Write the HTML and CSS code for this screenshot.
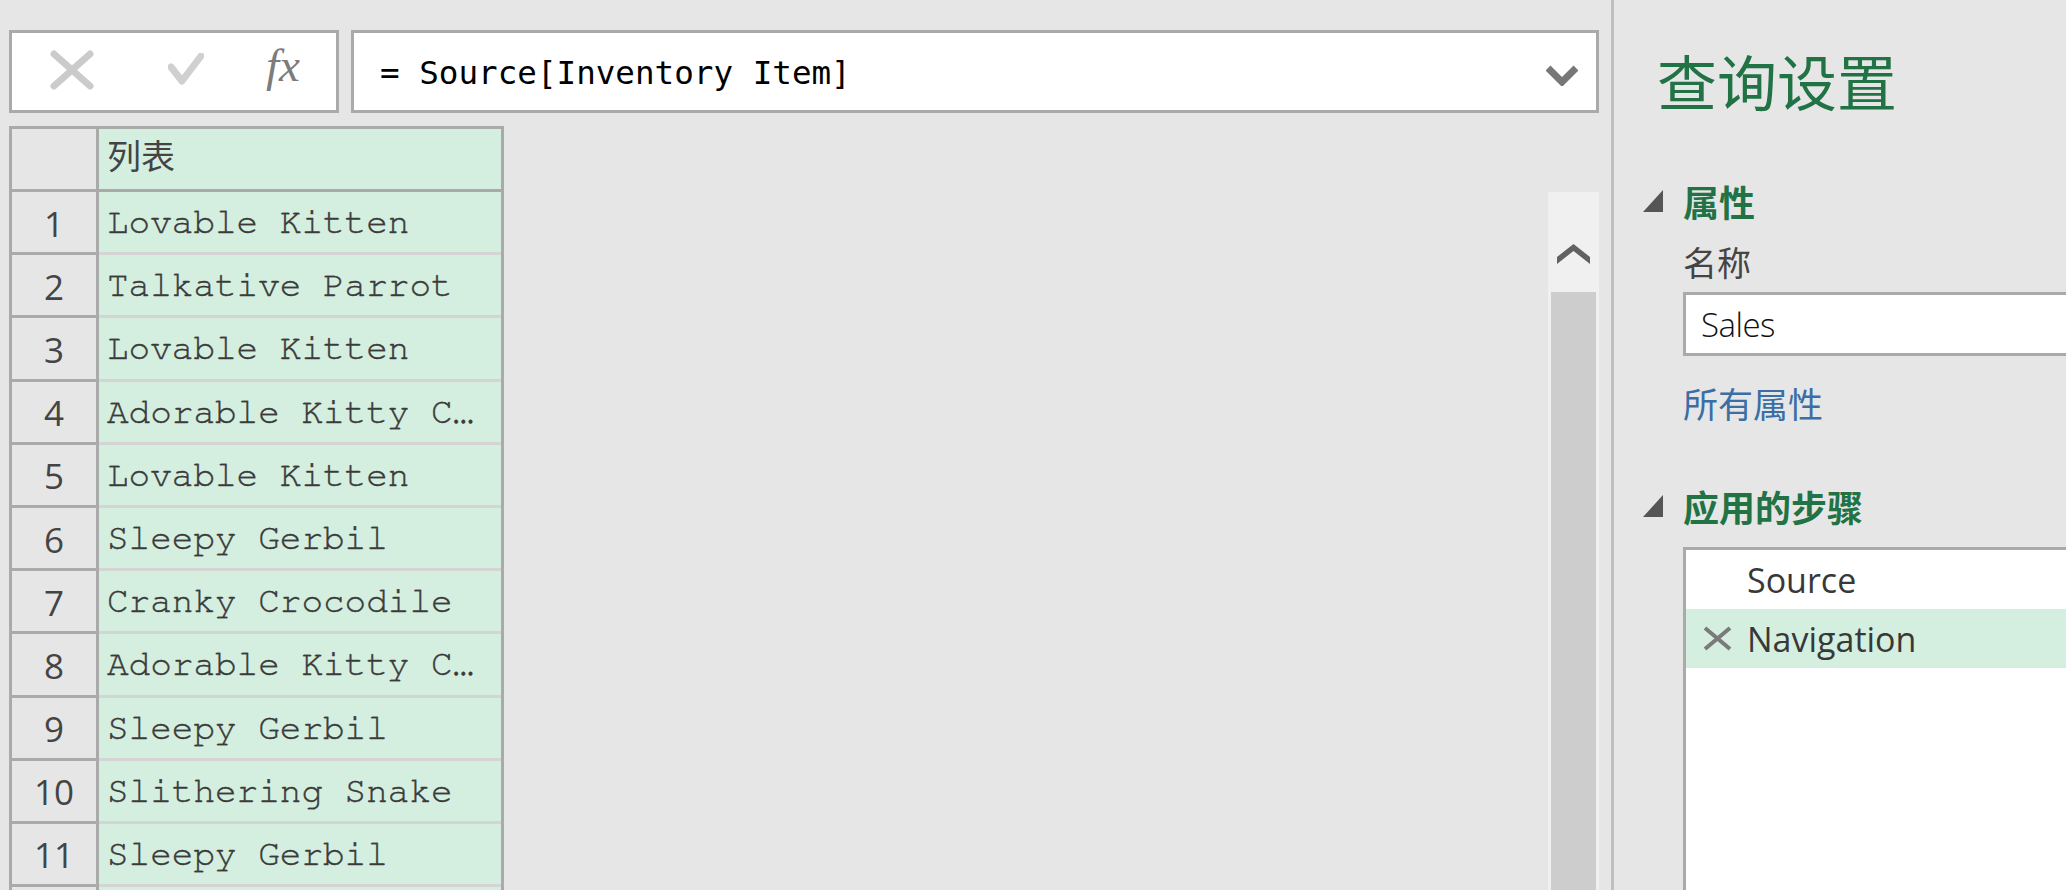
FILE: index.html
```html
<!DOCTYPE html>
<html lang="zh-CN">
<head>
<meta charset="utf-8">
<title>Power Query</title>
<link rel="stylesheet" href="styles.css">
</head>
<body>
<div class="app">
  <div class="left">
    <div class="toolbar">
      <div class="tools">
        <svg class="ic-cancel" width="44" height="40" viewBox="0 0 44 40"><path d="M4 4 L40 36 M40 4 L4 36" stroke="#cbcbcb" stroke-width="7" stroke-linecap="round" fill="none"/></svg>
        <svg class="ic-check" width="36" height="33" viewBox="0 0 36 33"><path d="M3 14 L14 28 L33 3" stroke="#d0d0d0" stroke-width="7" stroke-linecap="round" stroke-linejoin="round" fill="none"/></svg>
        <span class="fx">fx</span>
      </div>
      <div class="formula">
        <span class="formula-text">= Source[Inventory Item]</span>
        <svg class="chev-down" width="32" height="22" viewBox="0 0 32 22"><polyline points="2,4 16,18 30,4" stroke="#777" stroke-width="7" fill="none"/></svg>
      </div>
    </div>
    <div class="content">
      <div class="grid">
        <div class="row head"><div class="idx"></div><div class="cell hcell">列表</div></div>
        <div class="row"><div class="idx">1</div><div class="cell">Lovable Kitten</div></div>
        <div class="row"><div class="idx">2</div><div class="cell">Talkative Parrot</div></div>
        <div class="row"><div class="idx">3</div><div class="cell">Lovable Kitten</div></div>
        <div class="row"><div class="idx">4</div><div class="cell">Adorable Kitty Collar</div></div>
        <div class="row"><div class="idx">5</div><div class="cell">Lovable Kitten</div></div>
        <div class="row"><div class="idx">6</div><div class="cell">Sleepy Gerbil</div></div>
        <div class="row"><div class="idx">7</div><div class="cell">Cranky Crocodile</div></div>
        <div class="row"><div class="idx">8</div><div class="cell">Adorable Kitty Collar</div></div>
        <div class="row"><div class="idx">9</div><div class="cell">Sleepy Gerbil</div></div>
        <div class="row"><div class="idx">10</div><div class="cell">Slithering Snake</div></div>
        <div class="row"><div class="idx">11</div><div class="cell">Sleepy Gerbil</div></div>
        <div class="row"><div class="idx">12</div><div class="cell">Lovable Kitten</div></div>
      </div>
      <div class="scrollbar">
        <div class="scroll-up"><svg width="33" height="20" viewBox="0 0 33 20"><polygon points="0,13 16.5,0 33,13 33,20 16.5,7 0,20" fill="#616161"/></svg></div>
        <div class="thumb"></div>
      </div>
    </div>
  </div>
  <div class="divider"></div>
  <div class="right">
    <div class="title">查询设置</div>
    <div class="sec-head">
      <svg class="tri" width="20" height="22" viewBox="0 0 20 22"><polygon points="20,0 20,22 0,22" fill="#555"/></svg>
      <span>属性</span>
    </div>
    <div class="label">名称</div>
    <div class="input">Sales</div>
    <div class="link">所有属性</div>
    <div class="sec-head steps-head">
      <svg class="tri" width="20" height="22" viewBox="0 0 20 22"><polygon points="20,0 20,22 0,22" fill="#555"/></svg>
      <span>应用的步骤</span>
    </div>
    <div class="steps">
      <div class="step"><span class="step-ic"></span><span>Source</span></div>
      <div class="step active"><span class="step-ic"><svg width="29" height="25" viewBox="0 0 29 25"><path d="M2 2 L27 23 M27 2 L2 23" stroke="#7a7a7a" stroke-width="4" fill="none"/></svg></span><span>Navigation</span></div>
    </div>
  </div>
</div>
</body>
</html>
```

FILE: styles.css
```css
html, body {
  margin: 0;
  padding: 0;
  height: 890px;
  overflow: hidden;
  background: #e6e6e6;
  font-family: "Open Sans", "Noto Sans", "Noto Sans CJK SC", sans-serif;
}

.app {
  display: flex;
  height: 890px;
}

.left {
  width: 1611px;
  flex: none;
  box-sizing: border-box;
  padding: 30px 12px 0 9px;
  display: flex;
  flex-direction: column;
}

.toolbar {
  display: flex;
  gap: 12px;
  height: 83px;
}

.tools {
  width: 330px;
  box-sizing: border-box;
  border: 3px solid #aaaaaa;
  background: #ffffff;
  display: flex;
  align-items: flex-start;
}

.ic-cancel {
  margin: 17px 0 0 38px;
}

.ic-check {
  margin: 20px 0 0 74px;
}

.fx {
  margin: 9px 0 0 62px;
  font-family: "Liberation Serif", serif;
  font-style: italic;
  font-size: 47px;
  line-height: 47px;
  color: #7c7c7c;
}

.formula {
  flex: 1;
  box-sizing: border-box;
  border: 3px solid #aaaaaa;
  background: #ffffff;
  display: flex;
  align-items: center;
  padding: 0 18px 0 26px;
}

.formula-text {
  margin-top: 3px;
  font-family: "DejaVu Sans Mono", "Liberation Mono", monospace;
  font-size: 32.6px;
  color: #000000;
  white-space: pre;
}

.chev-down {
  margin-left: auto;
  margin-top: 6px;
}

.content {
  display: flex;
  margin-top: 13px;
  flex: 1;
  min-height: 0;
}

.grid {
  width: 495px;
  flex: none;
  box-sizing: border-box;
  border: 3px solid #aaaaaa;
  border-bottom: none;
  align-self: flex-start;
}

.row {
  display: flex;
  height: 63.2px;
}

.row.head {
  height: 63px;
}

.idx {
  width: 87px;
  flex: none;
  box-sizing: border-box;
  border-right: 3px solid #aaaaaa;
  border-bottom: 3px solid #aaaaaa;
  display: flex;
  align-items: center;
  justify-content: center;
  padding-top: 2px;
  font-family: "Open Sans", sans-serif;
  font-size: 35px;
  color: #444444;
}

.cell {
  flex: 1;
  min-width: 0;
  box-sizing: border-box;
  border-bottom: 3px solid #d4d4d4;
  background: #d4efdf;
  padding: 1px 14px 0 8px;
  line-height: 58px;
  font-family: "Nimbus Mono PS", "Nimbus Mono L", "FreeMono", "Courier New", "Liberation Mono", monospace;
  font-size: 36px;
  color: #3a3a3a;
  -webkit-text-stroke: 0.4px #3a3a3a;
  white-space: nowrap;
  overflow: hidden;
  text-overflow: ellipsis;
}

.row.head .cell {
  border-bottom-color: #aaaaaa;
  padding-top: 0;
  line-height: 52px;
  font-family: "Noto Sans CJK SC", sans-serif;
  font-size: 34px;
  color: #444444;
  -webkit-text-stroke: 0;
}

.scrollbar {
  margin-left: auto;
  margin-top: 66px;
  width: 51px;
  background: #f0f0f0;
  display: flex;
  flex-direction: column;
}

.scroll-up {
  height: 100px;
  box-sizing: border-box;
  padding-top: 52px;
  display: flex;
  justify-content: center;
  flex: none;
}

.thumb {
  flex: 1;
  margin: 0 3px;
  background: #cdcdcd;
}

.divider {
  width: 3px;
  flex: none;
  background: #bfbfbf;
}

.right {
  flex: 1;
  min-width: 0;
  box-sizing: border-box;
  padding: 50px 0 0 29px;
  display: flex;
  flex-direction: column;
  overflow: hidden;
}

.title {
  margin-left: 14px;
  font-family: "Noto Sans CJK SC", sans-serif;
  font-size: 60px;
  line-height: 60px;
  color: #217346;
  white-space: nowrap;
}

.sec-head {
  display: flex;
  align-items: center;
  margin-top: 73px;
  height: 36px;
  font-family: "Noto Sans CJK SC", sans-serif;
  font-weight: 700;
  font-size: 36px;
  line-height: 36px;
  color: #217346;
  white-space: nowrap;
}

.sec-head .tri {
  margin-right: 20px;
  flex: none;
}

.steps-head {
  margin-top: 68px;
}

.label {
  margin: 26px 0 0 40px;
  font-family: "Noto Sans CJK SC", sans-serif;
  font-size: 34px;
  line-height: 34px;
  color: #444444;
}

.input {
  margin: 13px 0 0 40px;
  width: 480px;
  height: 64px;
  flex: none;
  box-sizing: border-box;
  border: 3px solid #aaaaaa;
  background: #ffffff;
  padding-left: 15px;
  display: flex;
  align-items: center;
  font-family: "Open Sans", sans-serif;
  font-weight: 300;
  font-size: 33px;
  letter-spacing: -0.5px;
  color: #111111;
}

.link {
  margin: 29px 0 0 40px;
  font-family: "Noto Sans CJK SC", sans-serif;
  font-size: 35px;
  line-height: 35px;
  color: #3a6ea5;
  white-space: nowrap;
}

.steps {
  margin: 23px 0 0 40px;
  width: 480px;
  flex: 1;
  box-sizing: border-box;
  border-left: 3px solid #aaaaaa;
  border-top: 3px solid #aaaaaa;
  background: #ffffff;
}

.step {
  display: flex;
  align-items: center;
  height: 59px;
  padding-left: 17px;
  gap: 14px;
  font-family: "Open Sans", sans-serif;
  font-size: 34px;
  color: #383838;
}

.step.active {
  background: #d4efdf;
}

.step-ic {
  width: 30px;
  height: 25px;
  flex: none;
  display: flex;
  align-items: center;
}
```
